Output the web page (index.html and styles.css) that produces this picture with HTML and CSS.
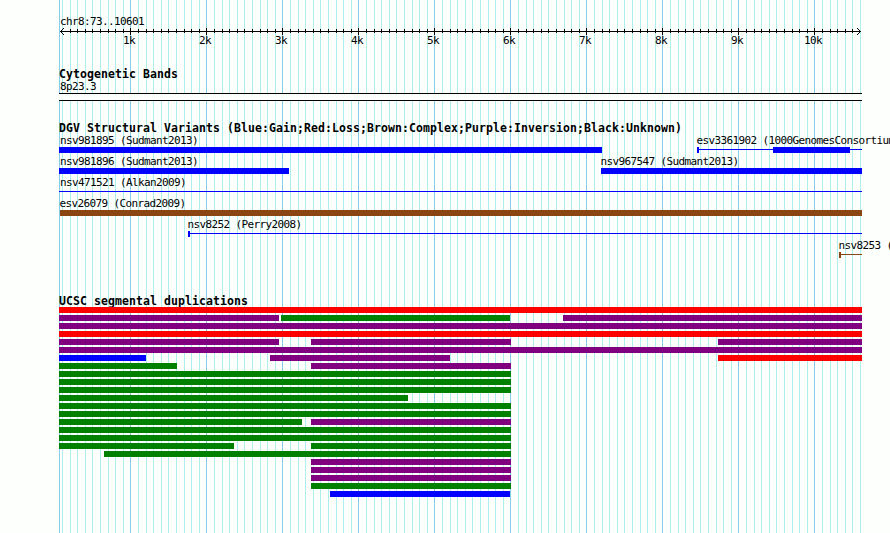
FILE: index.html
```html
<!DOCTYPE html>
<html lang="en">

<head>
    <meta charset="UTF-8">
    <title>chr8:73..10601</title>
    <link rel="stylesheet" href="styles.css">
</head>

<body>
    <div class="browser">
        <div class="ruler">
            <div class="label">chr8:73..10601</div>
            <svg class="axis" width="803" height="7" shape-rendering="crispEdges">
                <defs>
                    <pattern id="ticks" x="71" y="0" width="76" height="7" patternUnits="userSpaceOnUse">
                        <path d="M0 0h1v7h-1z M8 1h1v4h-1z M16 1h1v4h-1z M23 1h1v4h-1z M31 1h1v4h-1z M38 1h1v4h-1z M46 1h1v4h-1z M54 1h1v4h-1z M61 1h1v4h-1z M69 1h1v4h-1z" />
                    </pattern>
                </defs>
                <rect x="6" y="0" width="793" height="7" fill="url(#ticks)" />
                <rect x="1" y="3" width="801" height="1" />
                <path d="M2 2h1v1h-1z M3 1h1v1h-1z M4 0h1v1h-1z M2 4h1v1h-1z M3 5h1v1h-1z M4 6h1v1h-1z" />
                <path d="M800 2h1v1h-1z M799 1h1v1h-1z M798 0h1v1h-1z M800 4h1v1h-1z M799 5h1v1h-1z M798 6h1v1h-1z" />
            </svg>
            <div class="scale">
                <span>1k</span>
                <span>2k</span>
                <span>3k</span>
                <span>4k</span>
                <span>5k</span>
                <span>6k</span>
                <span>7k</span>
                <span>8k</span>
                <span>9k</span>
                <span>10k</span>
            </div>
        </div>

        <div class="track cytobands">
            <h2>Cytogenetic Bands</h2>
            <div class="label">8p23.3</div>
            <div class="band"></div>
        </div>

        <div class="track variants">
            <h2>DGV Structural Variants (Blue:Gain;Red:Loss;Brown:Complex;Purple:Inversion;Black:Unknown)</h2>
            <div class="row">
                <div class="feature" style="width: 543px">
                    <div class="label">nsv981895 (Sudmant2013)</div>
                    <div class="bar blue"></div>
                </div>
                <div class="feature" style="margin-left: 95px; width: 165px">
                    <div class="label shift">esv3361902 (1000GenomesConsortium)</div>
                    <div class="span blue">
                        <div class="bar blue" style="margin-left: 74px; width: 77px"></div>
                    </div>
                </div>
            </div>
            <div class="row">
                <div class="feature" style="width: 230px">
                    <div class="label">nsv981896 (Sudmant2013)</div>
                    <div class="bar blue"></div>
                </div>
                <div class="feature" style="margin-left: 312px; width: 261px">
                    <div class="label shift">nsv967547 (Sudmant2013)</div>
                    <div class="bar blue"></div>
                </div>
            </div>
            <div class="row">
                <div class="feature" style="width: 803px">
                    <div class="label">nsv471521 (Alkan2009)</div>
                    <div class="span open blue"></div>
                </div>
            </div>
            <div class="row">
                <div class="feature" style="margin-left: 1px; width: 802px">
                    <div class="label shift">esv26079 (Conrad2009)</div>
                    <div class="bar brown"></div>
                </div>
            </div>
            <div class="row">
                <div class="feature" style="margin-left: 129px; width: 674px">
                    <div class="label shift">nsv8252 (Perry2008)</div>
                    <div class="span blue"></div>
                </div>
            </div>
            <div class="row">
                <div class="feature" style="margin-left: 780px; width: 23px">
                    <div class="label shift">nsv8253 (Perry2008)</div>
                    <div class="span brown"></div>
                </div>
            </div>
        </div>

        <div class="track duplications">
            <h2>UCSC segmental duplications</h2>
            <div class="dup">
                <div class="bar red" style="width: 803px"></div>
            </div>
            <div class="dup">
                <div class="bar purple" style="width: 220px"></div>
                <div class="bar green" style="margin-left: 2px; width: 229px"></div>
                <div class="bar purple" style="margin-left: 53px; width: 299px"></div>
            </div>
            <div class="dup">
                <div class="bar purple" style="width: 803px"></div>
            </div>
            <div class="dup">
                <div class="bar red" style="width: 803px"></div>
            </div>
            <div class="dup">
                <div class="bar purple" style="width: 220px"></div>
                <div class="bar purple" style="margin-left: 32px; width: 200px"></div>
                <div class="bar purple" style="margin-left: 207px; width: 144px"></div>
            </div>
            <div class="dup">
                <div class="bar purple" style="width: 803px"></div>
            </div>
            <div class="dup">
                <div class="bar blue" style="width: 87px"></div>
                <div class="bar purple" style="margin-left: 124px; width: 180px"></div>
                <div class="bar red" style="margin-left: 268px; width: 144px"></div>
            </div>
            <div class="dup">
                <div class="bar green" style="width: 118px"></div>
                <div class="bar purple" style="margin-left: 134px; width: 200px"></div>
            </div>
            <div class="dup">
                <div class="bar green" style="width: 452px"></div>
            </div>
            <div class="dup">
                <div class="bar green" style="width: 452px"></div>
            </div>
            <div class="dup">
                <div class="bar green" style="width: 452px"></div>
            </div>
            <div class="dup">
                <div class="bar green" style="width: 349px"></div>
            </div>
            <div class="dup">
                <div class="bar green" style="width: 452px"></div>
            </div>
            <div class="dup">
                <div class="bar green" style="width: 452px"></div>
            </div>
            <div class="dup">
                <div class="bar green" style="width: 243px"></div>
                <div class="bar purple" style="margin-left: 9px; width: 200px"></div>
            </div>
            <div class="dup">
                <div class="bar green" style="width: 452px"></div>
            </div>
            <div class="dup">
                <div class="bar green" style="width: 452px"></div>
            </div>
            <div class="dup">
                <div class="bar green" style="width: 175px"></div>
                <div class="bar green" style="margin-left: 77px; width: 200px"></div>
            </div>
            <div class="dup">
                <div class="bar green" style="margin-left: 45px; width: 407px"></div>
            </div>
            <div class="dup">
                <div class="bar purple" style="margin-left: 252px; width: 200px"></div>
            </div>
            <div class="dup">
                <div class="bar purple" style="margin-left: 252px; width: 200px"></div>
            </div>
            <div class="dup">
                <div class="bar purple" style="margin-left: 252px; width: 200px"></div>
            </div>
            <div class="dup">
                <div class="bar green" style="margin-left: 252px; width: 200px"></div>
            </div>
            <div class="dup">
                <div class="bar blue" style="margin-left: 271px; width: 180px"></div>
            </div>
        </div>
    </div>
</body>

</html>
```

FILE: styles.css
```css
body {
    margin: 0;
    height: 533px;
    overflow: hidden;
    background-color: #fdfffc;
    color: #000;
    font-family: "DejaVu Sans Mono", "Liberation Mono", monospace;
}

/* one 76px tile per 1k bases, ten grid lines in each */
.browser {
    box-sizing: border-box;
    width: 803px;
    height: 533px;
    margin-left: 59px;
    padding-top: 16px;
    background-image:
        linear-gradient(#87ceeb, #87ceeb),
        linear-gradient(to right,
            #87ceeb 1px, transparent 1px 8px,
            #afeeee 8px 9px, transparent 9px 16px,
            #afeeee 16px 17px, transparent 17px 23px,
            #afeeee 23px 24px, transparent 24px 31px,
            #afeeee 31px 32px, transparent 32px 38px,
            #afeeee 38px 39px, transparent 39px 46px,
            #afeeee 46px 47px, transparent 47px 54px,
            #afeeee 54px 55px, transparent 55px 61px,
            #afeeee 61px 62px, transparent 62px 69px,
            #afeeee 69px 70px, transparent 70px);
    background-size: 1px 100%, 76px 100%;
    background-position: 0 0, 71px 0;
    background-repeat: no-repeat, repeat-x;
}

.label,
.scale {
    height: 12px;
    font-size: 11px;
    line-height: 12px;
    letter-spacing: -0.622px;
    white-space: nowrap;
}

.label {
    padding-left: 1px;
}

.label.shift {
    padding-left: 0;
    margin-left: -0.6px;
}

h2 {
    margin: 0;
    height: 12px;
    font-size: 11.5px;
    line-height: 12px;
    letter-spacing: 0.077px;
    white-space: nowrap;
}

.ruler {
    height: 52px;
}

.axis {
    display: block;
}

.scale {
    display: flex;
    padding-left: 32px;
}

.scale span {
    flex: none;
    width: 76px;
    text-align: center;
}

.cytobands {
    height: 54px;
}

.cytobands .label {
    padding-top: 1px;
}

.band {
    box-sizing: border-box;
    height: 8px;
    border-top: 1px solid #000;
    border-bottom: 1px solid #000;
    background-color: #fdfffc;
}

.variants {
    height: 173px;
}

.row {
    display: flex;
    height: 21px;
}

.row:first-of-type {
    margin-top: 1px;
}

.feature {
    flex: none;
}

.bar {
    flex: none;
    height: 6px;
}

.span {
    height: 6px;
    border-left: 2px solid currentColor;
    background: linear-gradient(currentColor, currentColor) 0 2px / 100% 1px no-repeat;
}

.span.open {
    border-left: none;
}

.dup {
    display: flex;
    height: 8px;
}

.bar.blue {
    background-color: #0000ff;
}

.bar.red {
    background-color: #ff0000;
}

.bar.green {
    background-color: #008000;
}

.bar.purple {
    background-color: #800080;
}

.bar.brown {
    background-color: #8b4513;
}

.span.blue {
    color: #0000ff;
}

.span.brown {
    color: #8b4513;
}
```
